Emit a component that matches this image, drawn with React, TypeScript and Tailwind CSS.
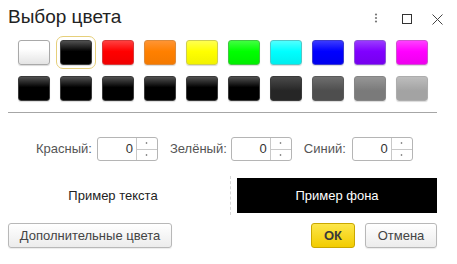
import React from "react";

const row1 = [
  "bg-[linear-gradient(#ffffff_35%,#e4e4e4)] border-[#a9a9a9]",
  "bg-[linear-gradient(#505050,#000000_45%)] border-[#3a3a3a]",
  "bg-[linear-gradient(#ff4040,#ff0000_45%,#f00000)] border-[#d83838]",
  "bg-[linear-gradient(#ff9433,#ff8000_45%,#f47a00)] border-[#dd8a3a]",
  "bg-[linear-gradient(#ffff50,#ffff00_45%,#f2f200)] border-[#cfcf50]",
  "bg-[linear-gradient(#40ff40,#00ff00_45%,#00ee00)] border-[#40c840]",
  "bg-[linear-gradient(#50ffff,#00ffff_45%,#00eeee)] border-[#50c8c8]",
  "bg-[linear-gradient(#3a3aff,#0000ff_45%,#0000ee)] border-[#3a3ad0]",
  "bg-[linear-gradient(#9a3aff,#8000ff_45%,#7600ee)] border-[#8a50d8]",
  "bg-[linear-gradient(#ff40ff,#ff00ff_45%,#ee00ee)] border-[#d050d0]",
];

const row2 = [
  "bg-[linear-gradient(#505050,#000000_45%)] border-[#3a3a3a]",
  "bg-[linear-gradient(#505050,#000000_45%)] border-[#3a3a3a]",
  "bg-[linear-gradient(#505050,#000000_45%)] border-[#3a3a3a]",
  "bg-[linear-gradient(#505050,#000000_45%)] border-[#3a3a3a]",
  "bg-[linear-gradient(#505050,#000000_45%)] border-[#3a3a3a]",
  "bg-[linear-gradient(#505050,#000000_45%)] border-[#3a3a3a]",
  "bg-[linear-gradient(#4a4a4a,#262626_60%)] border-[#3a3a3a]",
  "bg-[linear-gradient(#6e6e6e,#4e4e4e_60%)] border-[#5a5a5a]",
  "bg-[linear-gradient(#969696,#7a7a7a_60%)] border-[#858585]",
  "bg-[linear-gradient(#bdbdbd,#a3a3a3_60%)] border-[#adadad]",
];

function Swatch({ cls, selected }: { cls: string; selected?: boolean }) {
  return (
    <div
      className={
        "w-[32px] h-[25px] rounded-[3px] border shadow-[0_1px_1px_rgba(0,0,0,0.15)] " +
        cls +
        (selected ? " outline outline-1 outline-[#e6cf7a] outline-offset-[3px]" : "")
      }
    />
  );
}

function NumInput() {
  return (
    <div className="flex w-[61px] h-[24px] border border-[#b5b5b5] rounded-[3px] bg-white">
      <div className="flex-1 flex items-center justify-end pr-[3px] text-[13px] text-[#333]">0</div>
      <div className="w-[21px] border-l border-[#c8c8c8] flex flex-col">
        <div className="flex-1 flex items-center justify-center border-b border-[#c8c8c8]">
          <svg width="5" height="4" viewBox="0 0 5 4">
            <path d="M2.5 1 L2.5 3" stroke="#777" strokeWidth="1" />
            <path d="M1.5 2 L3.5 2" stroke="#aaa" strokeWidth="1" />
          </svg>
        </div>
        <div className="flex-1 flex items-center justify-center">
          <svg width="5" height="4" viewBox="0 0 5 4">
            <path d="M2.5 1 L2.5 3" stroke="#777" strokeWidth="1" />
            <path d="M1.5 2 L3.5 2" stroke="#aaa" strokeWidth="1" />
          </svg>
        </div>
      </div>
    </div>
  );
}

export default function App() {
  return (
    <div className="w-[457px] h-[264px] bg-white font-['Liberation_Sans',Arial,sans-serif] text-[#333] flex flex-col">
      {/* Header */}
      <div className="flex items-start pt-[5px] pl-[8px] pr-[14px] h-[29px]">
        <div className="text-[19px] leading-[24px] text-[#222] flex-1">Выбор цвета</div>
        <div className="flex items-center h-[24px] gap-[0px] mt-[2px]">
          <svg width="8" height="12" viewBox="0 0 8 12" className="mr-[22px]">
            <circle cx="4" cy="1.5" r="1.1" fill="#777" />
            <circle cx="4" cy="5" r="1.1" fill="#777" />
            <circle cx="4" cy="8.5" r="1.1" fill="#777" />
          </svg>
          <svg width="10" height="10" viewBox="0 0 10 10" className="mr-[20px]">
            <rect x="0.5" y="0.5" width="9" height="9" fill="none" stroke="#333" strokeWidth="1" />
          </svg>
          <svg width="11" height="11" viewBox="0 0 11 11">
            <path d="M0.5 0.5 L10.5 10.5 M10.5 0.5 L0.5 10.5" stroke="#444" strokeWidth="1" />
          </svg>
        </div>
      </div>

      {/* Swatches */}
      <div className="mt-[11px] pl-[18px] flex flex-col gap-[11px]">
        <div className="flex gap-[10px]">
          {row1.map((c, i) => (
            <Swatch key={i} cls={c} selected={i === 1} />
          ))}
        </div>
        <div className="flex gap-[10px]">
          {row2.map((c, i) => (
            <Swatch key={i} cls={c} />
          ))}
        </div>
      </div>

      {/* Separator */}
      <div className="mt-[11px] ml-[8px] mr-[20px] h-px bg-[#a6a6a6]" />

      {/* RGB inputs */}
      <div className="mt-[24px] pl-[36px] flex items-center text-[13px] text-[#555]">
        <span className="mr-[5px]">Красный:</span>
        <NumInput />
        <span className="ml-[12px] mr-[4px]">Зелёный:</span>
        <NumInput />
        <span className="ml-[12px] mr-[6px]">Синий:</span>
        <NumInput />
      </div>

      {/* Samples */}
      <div className="mt-[17px] flex items-stretch h-[35px]">
        <div className="ml-[8px] w-[210px] flex items-center justify-center text-[13px] text-[#222]">
          Пример текста
        </div>
        <div className="ml-[12px] mt-[-2px] mb-[-2px] border-l border-dashed border-[#d8d8d8]" />
        <div className="ml-[6px] w-[200px] bg-black flex items-center justify-center text-[13px] text-white">
          Пример фона
        </div>
      </div>

      {/* Buttons */}
      <div className="mt-[10px] flex items-center pl-[8px] pr-[20px]">
        <button className="h-[25px] w-[164px] rounded-[3px] border border-[#b8b8b8] bg-[linear-gradient(#ffffff,#ececec)] text-[13px] text-[#444] shadow-[0_1px_1px_rgba(0,0,0,0.08)]">
          Дополнительные цвета
        </button>
        <div className="flex-1" />
        <button className="h-[25px] w-[44px] rounded-[3px] border border-[#c9a700] bg-[linear-gradient(#fde64a,#f2cc00)] text-[13px] font-bold text-[#3a3a3a]">
          ОК
        </button>
        <button className="ml-[10px] h-[25px] w-[72px] rounded-[3px] border border-[#b8b8b8] bg-[linear-gradient(#ffffff,#ececec)] text-[13px] text-[#444] shadow-[0_1px_1px_rgba(0,0,0,0.08)]">
          Отмена
        </button>
      </div>
    </div>
  );
}
